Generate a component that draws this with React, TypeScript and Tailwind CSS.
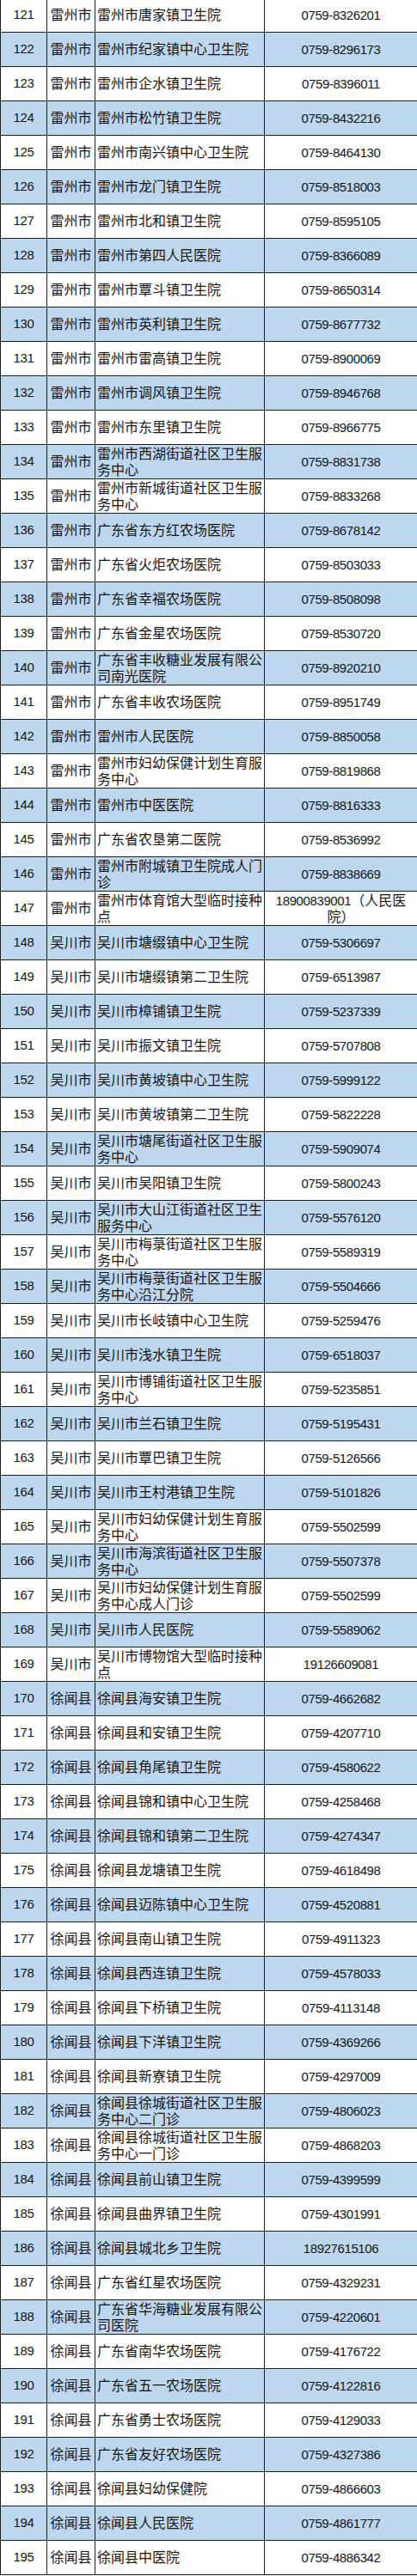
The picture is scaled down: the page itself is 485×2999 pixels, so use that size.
type Row = [number, string, string, string]

const rows: Row[] = [
  [121, '雷州市', '雷州市唐家镇卫生院', '0759-8326201'],
  [122, '雷州市', '雷州市纪家镇中心卫生院', '0759-8296173'],
  [123, '雷州市', '雷州市企水镇卫生院', '0759-8396011'],
  [124, '雷州市', '雷州市松竹镇卫生院', '0759-8432216'],
  [125, '雷州市', '雷州市南兴镇中心卫生院', '0759-8464130'],
  [126, '雷州市', '雷州市龙门镇卫生院', '0759-8518003'],
  [127, '雷州市', '雷州市北和镇卫生院', '0759-8595105'],
  [128, '雷州市', '雷州市第四人民医院', '0759-8366089'],
  [129, '雷州市', '雷州市覃斗镇卫生院', '0759-8650314'],
  [130, '雷州市', '雷州市英利镇卫生院', '0759-8677732'],
  [131, '雷州市', '雷州市雷高镇卫生院', '0759-8900069'],
  [132, '雷州市', '雷州市调风镇卫生院', '0759-8946768'],
  [133, '雷州市', '雷州市东里镇卫生院', '0759-8966775'],
  [134, '雷州市', '雷州市西湖街道社区卫生服务中心', '0759-8831738'],
  [135, '雷州市', '雷州市新城街道社区卫生服务中心', '0759-8833268'],
  [136, '雷州市', '广东省东方红农场医院', '0759-8678142'],
  [137, '雷州市', '广东省火炬农场医院', '0759-8503033'],
  [138, '雷州市', '广东省幸福农场医院', '0759-8508098'],
  [139, '雷州市', '广东省金星农场医院', '0759-8530720'],
  [140, '雷州市', '广东省丰收糖业发展有限公司南光医院', '0759-8920210'],
  [141, '雷州市', '广东省丰收农场医院', '0759-8951749'],
  [142, '雷州市', '雷州市人民医院', '0759-8850058'],
  [143, '雷州市', '雷州市妇幼保健计划生育服务中心', '0759-8819868'],
  [144, '雷州市', '雷州市中医医院', '0759-8816333'],
  [145, '雷州市', '广东省农垦第二医院', '0759-8536992'],
  [146, '雷州市', '雷州市附城镇卫生院成人门诊', '0759-8838669'],
  [147, '雷州市', '雷州市体育馆大型临时接种点', '18900839001|（人民医院）'],
  [148, '吴川市', '吴川市塘缀镇中心卫生院', '0759-5306697'],
  [149, '吴川市', '吴川市塘缀镇第二卫生院', '0759-6513987'],
  [150, '吴川市', '吴川市樟铺镇卫生院', '0759-5237339'],
  [151, '吴川市', '吴川市振文镇卫生院', '0759-5707808'],
  [152, '吴川市', '吴川市黄坡镇中心卫生院', '0759-5999122'],
  [153, '吴川市', '吴川市黄坡镇第二卫生院', '0759-5822228'],
  [154, '吴川市', '吴川市塘尾街道社区卫生服务中心', '0759-5909074'],
  [155, '吴川市', '吴川市吴阳镇卫生院', '0759-5800243'],
  [156, '吴川市', '吴川市大山江街道社区卫生服务中心', '0759-5576120'],
  [157, '吴川市', '吴川市梅菉街道社区卫生服务中心', '0759-5589319'],
  [158, '吴川市', '吴川市梅菉街道社区卫生服务中心沿江分院', '0759-5504666'],
  [159, '吴川市', '吴川市长岐镇中心卫生院', '0759-5259476'],
  [160, '吴川市', '吴川市浅水镇卫生院', '0759-6518037'],
  [161, '吴川市', '吴川市博铺街道社区卫生服务中心', '0759-5235851'],
  [162, '吴川市', '吴川市兰石镇卫生院', '0759-5195431'],
  [163, '吴川市', '吴川市覃巴镇卫生院', '0759-5126566'],
  [164, '吴川市', '吴川市王村港镇卫生院', '0759-5101826'],
  [165, '吴川市', '吴川市妇幼保健计划生育服务中心', '0759-5502599'],
  [166, '吴川市', '吴川市海滨街道社区卫生服务中心', '0759-5507378'],
  [167, '吴川市', '吴川市妇幼保健计划生育服务中心成人门诊', '0759-5502599'],
  [168, '吴川市', '吴川市人民医院', '0759-5589062'],
  [169, '吴川市', '吴川市博物馆大型临时接种点', '19126609081'],
  [170, '徐闻县', '徐闻县海安镇卫生院', '0759-4662682'],
  [171, '徐闻县', '徐闻县和安镇卫生院', '0759-4207710'],
  [172, '徐闻县', '徐闻县角尾镇卫生院', '0759-4580622'],
  [173, '徐闻县', '徐闻县锦和镇中心卫生院', '0759-4258468'],
  [174, '徐闻县', '徐闻县锦和镇第二卫生院', '0759-4274347'],
  [175, '徐闻县', '徐闻县龙塘镇卫生院', '0759-4618498'],
  [176, '徐闻县', '徐闻县迈陈镇中心卫生院', '0759-4520881'],
  [177, '徐闻县', '徐闻县南山镇卫生院', '0759-4911323'],
  [178, '徐闻县', '徐闻县西连镇卫生院', '0759-4578033'],
  [179, '徐闻县', '徐闻县下桥镇卫生院', '0759-4113148'],
  [180, '徐闻县', '徐闻县下洋镇卫生院', '0759-4369266'],
  [181, '徐闻县', '徐闻县新寮镇卫生院', '0759-4297009'],
  [182, '徐闻县', '徐闻县徐城街道社区卫生服务中心二门诊', '0759-4806023'],
  [183, '徐闻县', '徐闻县徐城街道社区卫生服务中心一门诊', '0759-4868203'],
  [184, '徐闻县', '徐闻县前山镇卫生院', '0759-4399599'],
  [185, '徐闻县', '徐闻县曲界镇卫生院', '0759-4301991'],
  [186, '徐闻县', '徐闻县城北乡卫生院', '18927615106'],
  [187, '徐闻县', '广东省红星农场医院', '0759-4329231'],
  [188, '徐闻县', '广东省华海糖业发展有限公司医院', '0759-4220601'],
  [189, '徐闻县', '广东省南华农场医院', '0759-4176722'],
  [190, '徐闻县', '广东省五一农场医院', '0759-4122816'],
  [191, '徐闻县', '广东省勇士农场医院', '0759-4129033'],
  [192, '徐闻县', '广东省友好农场医院', '0759-4327386'],
  [193, '徐闻县', '徐闻县妇幼保健院', '0759-4866603'],
  [194, '徐闻县', '徐闻县人民医院', '0759-4861777'],
  [195, '徐闻县', '徐闻县中医院', '0759-4886342'],
]

function Phone({ value }: { value: string }) {
  const [digits, note] = value.split('|')
  return (
    <>
      <span>{digits}</span>
      {note && <span className="text-[16px] tracking-normal">{note}</span>}
    </>
  )
}

export default function App() {
  return (
    <div className="w-[485px] bg-white overflow-hidden">
      <table
        className="-mt-[3px] w-[485px] table-fixed border-collapse text-[#161616]"
        style={{ fontFamily: '"Liberation Sans", "Noto Sans CJK SC", sans-serif' }}
      >
        <colgroup>
          <col className="w-[54px]" />
          <col className="w-[56px]" />
          <col className="w-[197px]" />
          <col className="w-[178px]" />
        </colgroup>
        <tbody>
          {rows.map(([no, city, name, phone]) => (
            <tr key={no} className={no % 2 === 0 ? 'bg-[#bdd7ee]' : 'bg-white'}>
              <td className="h-[40px] border border-[#1e1e1e] p-0 text-center align-middle text-[15px] tracking-[-0.4px]">
                {no}
              </td>
              <td className="border border-[#1e1e1e] p-0 text-center align-middle text-[16px]">
                {city}
              </td>
              <td className="border border-[#1e1e1e] py-0 pl-[2px] pr-0 text-left align-middle text-[16px] leading-[19px]">
                {name}
              </td>
              <td className="border border-[#1e1e1e] px-[6px] py-0 text-center align-middle text-[15px] leading-[19px] tracking-[-0.4px]">
                <Phone value={phone} />
              </td>
            </tr>
          ))}
        </tbody>
      </table>
    </div>
  )
}
